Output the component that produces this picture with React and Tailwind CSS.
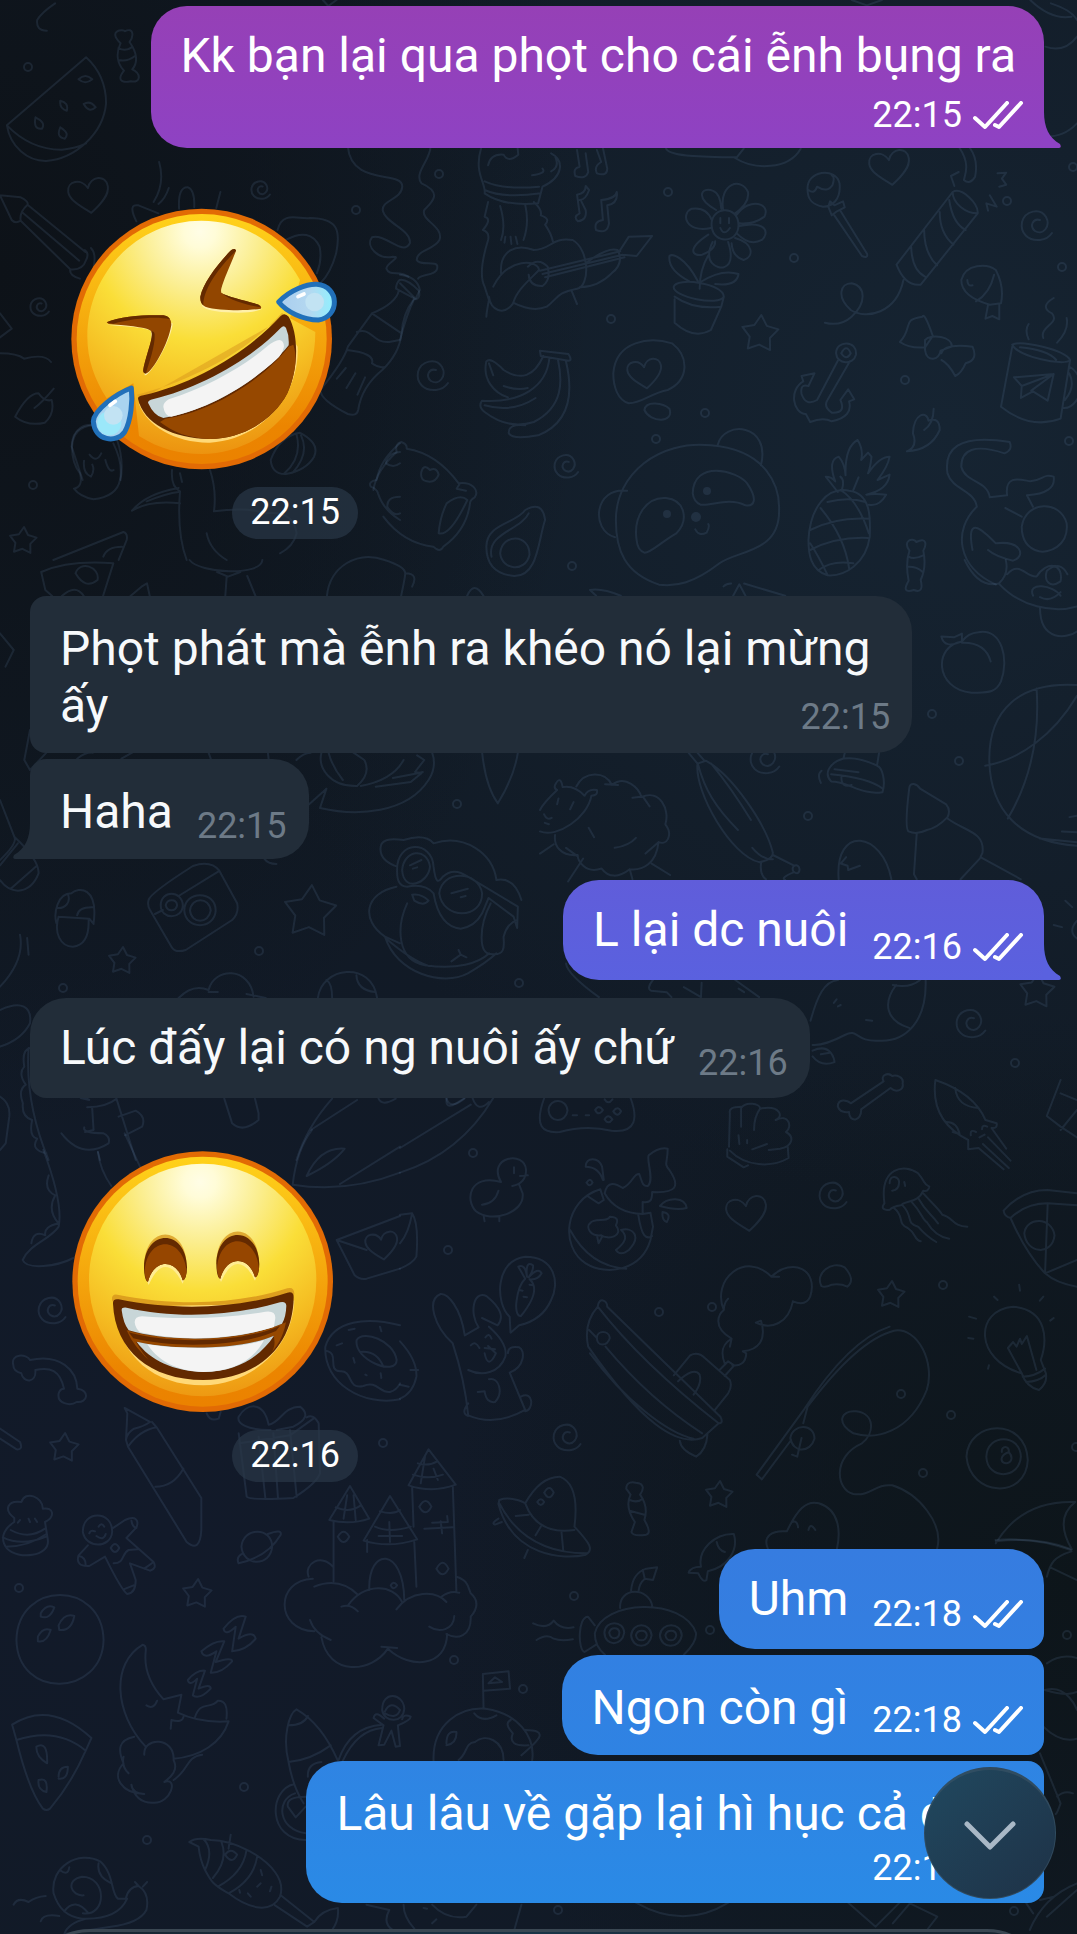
import clsx from "clsx"

const messages = [
  { id: 1, side: "out", text: "Kk bạn lại qua phọt cho cái ễnh bụng ra", time: "22:15", layout: "stacked", first: true, last: true, color: "bg-linear-to-b from-[#9640b6] to-[#8e42c3]", tail: "text-[#8e42c3]" },
  { id: 2, side: "in", sticker: "rofl", time: "22:15", space: "mt-[60px]" },
  { id: 3, side: "in", text: "Phọt phát mà ễnh ra khéo nó lại mừng ấy", time: "22:15", layout: "wrapped", space: "mt-[57px]" },
  { id: 4, side: "in", text: "Haha", time: "22:15", last: true, space: "mt-1.5" },
  { id: 5, side: "out", text: "L lại dc nuôi", time: "22:16", first: true, last: true, color: "bg-linear-to-b from-[#605dda] to-[#5a61df]", tail: "text-[#5a61df]", space: "mt-[21px]" },
  { id: 6, side: "in", text: "Lúc đấy lại có ng nuôi ấy chứ", time: "22:16", first: true, space: "mt-[18px]" },
  { id: 7, side: "in", sticker: "grin", time: "22:16", space: "mt-[53px]" },
  { id: 8, side: "out", text: "Uhm", time: "22:18", first: true, color: "bg-linear-to-b from-[#367ce0] to-[#337fe1]", space: "mt-[67px]" },
  { id: 9, side: "out", text: "Ngon còn gì", time: "22:18", color: "bg-linear-to-b from-[#3280e2] to-[#2f83e3]", space: "mt-1.5" },
  { id: 10, side: "out", text: "Lâu lâu về gặp lại hì hục cả đêm", time: "22:18", layout: "stacked", color: "bg-linear-to-b from-[#2f84e3] to-[#2a8ae6]", space: "mt-1.5" },
]

const spots = [
  [439, 174], [668, 192], [794, 258], [611, 319], [1007, 201], [1062, 267], [1073, 167], [905, 380], [1069, 441],
  [705, 413], [656, 439], [572, 566], [28, 67], [356, 210], [33, 485], [932, 714], [959, 761], [808, 816],
  [1015, 1063], [457, 804], [259, 951], [519, 983], [63, 988], [473, 1153], [448, 1250], [712, 1307], [659, 1312],
  [943, 1285], [901, 1394], [951, 1415], [923, 1473], [1076, 1447], [383, 1443], [19, 1588], [454, 1660],
  [523, 1689], [244, 1787], [147, 1840], [574, 1596], [710, 1630], [1067, 1635], [558, 1910], [1014, 1911],
]

const stars = [
  [760, 334, 19], [23, 541, 14], [310, 912, 27], [122, 961, 14], [1037, 991, 18], [891, 1295, 14], [719, 1495, 14],
  [64, 1448, 15], [197, 1594, 15],
]

const hearts = [[89, 196, 20], [890, 168, 20], [747, 1214, 20], [645, 374, 17], [382, 1246, 16]]

const swirls = [
  [435, 374, 18], [568, 465, 14], [1039, 224, 18], [262, 189, 11], [41, 306, 11], [973, 1022, 17], [767, 758, 17],
  [835, 1194, 16], [569, 1436, 16], [54, 1309, 16],
]

// each sheet keeps its own drawing scale
const sheets = [
  {
    // watermelon, candy, pencil, bottle
    place: "scale(.34439 .33333)",
    d: "M250 172 L20 376 C30 440 80 484 134 483 C220 476 300 400 308 310 C308 250 285 205 250 172 Z M20 376 Q90 450 180 449 Q220 445 250 430 M228 238 Q248 218 268 238 Q248 256 228 238 M243 312 Q262 300 278 322 Q258 340 243 312 M175 302 Q200 308 194 332 Q172 326 175 302 M103 352 Q134 368 122 386 Q96 390 103 352 M175 382 Q204 400 188 416 Q162 412 175 382 M350 130 C310 90 360 86 362 94 C390 80 388 110 376 126 C400 160 400 190 384 208 C410 220 410 250 380 244 C350 250 340 238 360 212 C340 190 336 160 350 130 M344 144 Q364 156 382 142 M344 180 Q370 186 392 168 M108 60 Q104 92 136 92 M108 60 Q120 38 160 10 M0 586 L60 592 Q84 604 80 614 L248 756 M0 586 L34 660 Q44 672 60 662 Q56 636 80 614 M60 662 L204 808 Q240 812 250 780 Q260 760 246 750 M66 638 L230 782 M204 808 Q200 826 232 836 M264 744 Q280 760 272 800 M462 486 Q480 550 446 606 M490 564 Q480 596 460 612 M640 576 L628 624 M520 626 Q516 560 546 562 Q566 570 564 622 M396 664 Q370 610 402 616 L460 640 M806 690 C820 630 870 660 900 654 C980 655 990 690 976 760 Q960 820 930 850 M830 720 Q900 680 928 740 Q936 780 920 820 M1010 440 C1020 560 1170 510 1168 560 C1166 600 1104 600 1112 634 C1120 670 1196 690 1190 730 C1170 770 1120 700 1080 712 C1060 740 1100 780 1140 770 C1170 770 1120 790 1122 806 C1130 830 1160 810 1186 830 M1250 440 C1250 480 1200 520 1224 550 C1290 580 1250 610 1232 630 C1220 660 1290 680 1276 720 C1260 750 1210 750 1210 780 C1220 800 1270 780 1270 800 C1270 830 1220 820 1214 836 M1160 840 Q1180 834 1216 872 Q1222 892 1208 898 L1150 866 Q1150 850 1160 840 M1158 872 Q1150 910 1080 940 L1010 1040 Q1000 1080 930 1170 Q930 1200 1010 1242 Q1036 1250 1040 1230 Q1050 1160 1110 1110 Q1160 1060 1166 1000 Q1170 940 1200 900 M1080 940 L1166 1000 M1036 996 C1080 980 1080 1030 1130 1026 L1160 1020 M1008 1050 Q1090 1060 1080 1090 Q1100 1106 1120 1100 M1004 1104 L978 1136 M1032 1120 L1006 1164 M1060 1132 L1038 1184 M44 1250 Q80 1180 112 1180 Q130 1206 150 1200 Q160 1240 130 1268 Q80 1280 44 1250 M156 1166 Q120 1210 100 1224 M0 1060 Q50 1060 70 1076 Q130 1060 148 1086 M0 940 L34 986 L0 1012 M208 1340 C210 1280 250 1270 280 1276 M208 1340 L240 1440 M340 1320 Q360 1380 350 1440 M244 1382 Q240 1420 264 1430 Q276 1410 268 1394 M306 1380 Q316 1420 330 1410 M260 1364 Q280 1390 294 1360 M786 1380 Q810 1310 870 1298 Q930 1330 912 1370 Q890 1410 830 1422 Q790 1424 786 1380 M860 1300 Q880 1370 826 1420 M874 1306 Q900 1360 850 1418",
  },
  {
    // hamster, strawberry and duck around the first sticker
    place: "translate(0 180) scale(.33333)",
    d: "M1200 790 Q1140 840 1130 900 Q1104 904 1112 920 Q1130 926 1134 940 Q1150 990 1200 1020 M1200 816 Q1160 820 1158 850 Q1180 866 1200 850 M1200 950 Q1160 950 1162 980 Q1180 1010 1200 1000 M516 870 Q512 920 540 934 Q530 1060 560 1140 M630 870 Q650 930 642 994 Q740 980 796 1000 Q880 990 890 1060 Q880 1100 840 1120 M396 992 Q440 940 536 924 M396 992 Q450 960 540 970 M440 964 Q500 940 536 936 M620 1060 Q630 1110 680 1140 M540 880 L546 906 M160 1140 L370 1056 Q384 1060 380 1080 L356 1140 M310 1130 Q320 1100 366 1100 M216 800 Q220 740 280 736 M340 790 Q370 850 360 900 Q350 950 280 958 Q240 950 222 926 Q250 920 240 880 Q216 850 216 800",
  },
  {
    // hamster face, strawberry
    place: "translate(360 420) scale(.33333)",
    d: "M40 210 Q50 150 110 96 Q104 70 124 66 Q142 72 140 86 Q230 100 296 190 Q324 186 340 200 Q356 216 344 232 Q330 240 330 250 Q320 330 250 380 Q240 400 220 380 Q130 370 70 290 M184 156 Q190 130 210 150 Q230 140 236 164 Q226 190 200 184 Q180 180 184 156 M260 250 Q300 220 322 240 Q270 350 236 340 Q240 290 260 250 M300 190 L290 206 L318 212",
  },
  {
    // llama with guitar, flower, lollipop, cracker, bananas, anchor, panda, pineapple, mug
    place: "translate(400 140) scale(.43176 .33333)",
    d: "M188 24 C170 100 200 130 196 160 Q240 200 320 190 L330 140 C380 110 380 60 350 40 M204 76 Q210 40 240 44 Q250 70 274 44 L272 20 M306 106 Q340 100 330 86 M360 52 Q370 80 350 94 M196 124 Q240 150 322 140 M196 150 Q240 176 326 160 M232 198 Q246 260 234 300 M290 194 Q300 250 286 300 M244 290 L242 308 M256 290 L258 312 M268 290 L272 312 M204 186 L196 230 Q214 236 192 270 Q208 276 204 300 Q180 400 196 440 L206 480 Q200 520 200 530 M310 186 Q330 210 326 226 Q350 236 336 254 Q350 280 354 304 M216 440 C250 350 320 360 322 390 C300 420 270 450 262 490 C240 530 210 510 206 470 M234 400 C230 330 270 310 310 330 C350 330 350 290 400 300 C440 330 440 440 410 446 C360 460 370 470 340 500 C310 516 280 500 262 488 M296 380 Q320 350 342 380 Q350 420 330 438 Q300 440 298 404 M324 392 L510 334 M330 402 L516 344 M336 412 L520 352 M510 330 L530 290 L584 288 L548 348 L516 344 M430 370 Q480 320 504 330 Q520 370 490 400 Q460 440 416 442 M398 454 L410 492 M410 30 L416 80 Q400 84 406 108 Q430 120 436 96 L430 40 M456 30 L466 66 Q448 80 456 100 Q480 110 480 86 L470 24 M416 220 L410 164 Q430 160 430 138 L438 150 Q430 180 416 180 M416 220 Q400 230 412 244 Q434 240 430 210 L420 184 M470 240 L466 180 Q500 176 502 156 M470 240 Q448 244 454 270 Q480 284 484 250 L480 196 Q506 190 502 156 M0 404 Q40 410 46 450 L36 476 Q0 430 0 430 M0 600 Q16 520 34 474 M722 260 C716 200 784 190 784 256 C784 310 726 314 722 260 M742 264 Q750 290 764 264 M742 234 L742 250 M762 234 L762 250 M732 210 C680 170 700 140 724 152 Q742 160 744 206 M748 206 C740 130 790 110 806 156 Q810 190 774 222 M780 224 C810 170 860 190 844 230 Q820 254 786 250 M786 258 C850 240 856 280 838 300 Q810 320 780 280 M776 294 C820 310 820 350 796 360 Q770 350 768 310 M724 306 C700 370 736 386 750 382 Q776 370 760 306 M714 284 C660 330 680 350 700 344 Q730 330 730 304 M720 264 C660 280 650 220 676 206 Q710 200 722 240 M714 346 Q694 390 694 446 M690 424 C660 350 630 340 624 348 Q620 390 670 424 M696 426 C740 390 770 396 784 402 Q780 440 730 432 M634 440 C640 410 750 430 750 470 C740 500 630 470 634 440 M636 470 Q680 510 744 500 L750 470 M636 478 L636 548 Q680 600 720 570 L744 500 M944 150 C940 90 1010 80 1018 130 C1022 180 1000 200 980 200 C956 194 944 180 944 150 M946 150 Q960 164 966 140 Q990 160 1002 134 Q1008 110 1000 106 M992 200 L996 184 L1006 196 L1026 184 L1030 202 L1012 214 L1000 226 Z M1006 226 L1070 348 Q1084 356 1082 342 L1020 212 M1280 156 C1300 140 1340 190 1338 220 C1310 220 1280 190 1280 156 M1280 156 L1150 374 Q1170 440 1206 434 L1338 220 M1250 216 Q1250 280 1282 314 M1214 270 Q1214 340 1244 376 M1184 322 Q1186 390 1216 410 M1272 180 Q1280 250 1310 270 M1166 420 C1150 520 1080 540 1044 510 C1010 470 1020 430 1046 430 C1080 440 1080 490 1046 530 Q1020 560 984 548 M1296 24 C1320 70 1310 100 1306 120 Q1320 136 1332 110 Q1340 60 1320 24 M1276 108 L1294 96 M1276 108 L1284 138 M1384 100 L1404 98 L1394 116 L1404 134 L1388 140 M1366 166 L1382 200 L1358 190 L1362 212 M1300 420 C1310 370 1360 370 1380 390 Q1400 440 1392 490 L1366 494 Q1300 470 1300 420 M1376 404 Q1366 460 1334 484 M1362 494 L1356 536 L1372 528 L1388 538 L1388 492 M1314 420 Q1314 440 1326 436 M1158 606 C1190 560 1160 540 1210 530 Q1214 514 1234 588 L1216 622 Q1180 626 1158 606 M1216 600 C1230 580 1280 590 1278 620 L1252 632 C1250 660 1220 670 1216 630 Z M1254 640 Q1260 610 1326 620 Q1340 660 1310 670 Q1300 700 1286 708 Q1270 670 1254 660 M1418 614 C1440 600 1540 630 1552 660 C1540 680 1430 650 1418 614 M1436 622 Q1500 630 1520 660 M1418 620 L1392 800 Q1460 870 1530 836 L1552 660 M1550 680 Q1580 700 1576 760 Q1560 806 1536 804 M1550 700 Q1566 740 1540 780 M1422 712 L1514 702 L1500 782 L1466 754 L1438 774 L1440 738 Z M1440 738 L1514 702 L1462 752 M1456 598 Q1446 570 1456 552 M1490 594 C1480 560 1530 550 1510 520 Q1480 500 1514 474 M1522 608 Q1550 570 1544 534 M324 632 L390 642 Q400 662 390 662 L326 648 Z M332 648 Q300 740 240 690 Q210 650 200 664 C190 720 220 760 250 772 M346 654 C340 740 280 790 190 782 Q180 800 196 816 Q250 870 310 846 C380 800 376 720 366 660 M384 662 C410 800 370 860 320 886 Q260 900 252 880 Q250 850 290 856 M240 738 Q270 752 296 744 M196 796 Q260 820 314 774 M206 670 L216 706 M494 700 C500 600 580 590 630 610 C670 650 670 720 620 750 C580 760 560 790 530 790 C504 780 494 740 494 700 M566 810 C570 780 610 790 624 806 C636 850 580 850 566 810 M1010 640 C1010 600 1060 600 1056 644 C1050 676 1012 674 1010 640 M1022 640 Q1034 610 1044 640 Q1034 664 1022 640 M1014 662 L966 780 Q940 800 930 762 Q926 730 946 738 L960 700 L930 708 L934 724 C900 750 910 820 940 822 L950 846 Q980 830 1000 844 Q1050 830 1040 784 L1052 778 L1038 748 L1020 780 Q1034 820 1000 818 Q980 800 990 780 L1042 664 M1174 934 Q1200 920 1188 880 C1190 820 1220 810 1224 842 Q1250 830 1250 870 Q1230 930 1174 934 M1236 806 Q1236 850 1214 870 M500 1140 C500 1000 600 900 720 916 C850 930 880 1040 878 1110 C880 1240 780 1230 740 1270 C680 1330 640 1340 600 1334 C520 1300 500 1230 500 1140 M736 914 C750 840 860 850 836 976 M526 1052 C450 1040 440 1170 498 1192 M678 1060 C680 960 780 990 804 1030 C830 1080 820 1100 800 1096 C760 1070 720 1100 696 1094 Q680 1084 678 1060 M548 1200 C540 1130 570 1070 616 1074 C660 1080 670 1140 640 1180 C600 1210 580 1240 566 1238 Q550 1230 548 1200 M684 1168 Q692 1190 710 1178 Q718 1160 714 1152 M946 1200 C950 1100 990 1040 1040 1052 C1090 1060 1090 1130 1088 1190 C1080 1270 1030 1310 990 1306 C950 1290 946 1240 946 1200 M950 1170 Q1010 1130 1088 1136 M950 1230 Q1010 1190 1084 1194 M970 1290 Q1000 1260 1050 1270 M974 1104 Q1030 1190 1040 1284 M1020 1050 Q1060 1080 1086 1180 M950 1210 Q970 1250 990 1304 M990 1086 Q1040 1070 1078 1086 M1014 1056 L986 1010 Q1000 1010 1008 1024 Q990 960 1016 950 Q1030 970 1032 1006 Q1030 920 1060 900 Q1074 930 1068 960 L1084 938 L1092 950 Q1090 980 1084 1000 Q1110 950 1134 950 Q1130 980 1106 1020 L1134 1004 Q1130 1050 1080 1064 Q1100 1060 1126 1064 Q1110 1100 1086 1094 M1024 1046 Q1030 1020 1020 1010 M1050 1050 L1062 1012 M200 1220 C200 1150 270 1150 290 1110 Q330 1080 336 1140 C320 1200 320 1310 264 1308 Q200 1300 200 1220 M212 1250 C200 1180 280 1170 298 1120 M232 1240 C236 1180 300 1180 300 1244 C290 1300 236 1290 232 1240 M1180 1232 C1164 1204 1186 1190 1196 1206 C1220 1190 1220 1214 1212 1232 Q1220 1280 1206 1320 Q1214 1362 1190 1350 Q1160 1362 1178 1322 Q1170 1270 1180 1232 Z M1178 1250 Q1190 1260 1212 1246 M1178 1280 Q1200 1280 1210 1296 M1412 906 C1290 880 1260 930 1268 1000 C1280 1050 1330 1050 1336 1100 C1280 1170 1290 1280 1380 1334 M1412 906 Q1420 930 1400 940 C1330 910 1300 930 1300 980 C1310 1030 1360 1020 1366 1072 L1406 1066 C1400 1000 1440 1020 1460 1024 C1490 1020 1490 1000 1514 1010 Q1520 1060 1452 1066 L1466 1100 M1440 1160 C1450 1080 1530 1080 1544 1150 C1550 1220 1500 1240 1480 1234 Q1440 1220 1440 1160 M1402 1104 L1440 1130 M1326 1230 C1310 1120 1350 1170 1380 1210 C1440 1200 1450 1250 1420 1262 Q1380 1250 1362 1230 M616 24 C620 50 700 50 780 52 L796 26 M776 54 C820 90 900 90 928 26",
  },
  {
    // loose bits beside the first bubble
    place: "scale(.68686 .33333)",
    d: "M470 0 L478 18 L490 0 M1240 0 L1262 16 L1284 0 M1530 10 Q1560 30 1568 60 M1522 140 Q1550 160 1568 110 M1522 410 Q1550 410 1568 370 M1500 0 Q1530 60 1560 50",
  },
  {
    // pizza, tree and brush tops above the second bubble
    place: "translate(0 560) scale(.68686 .33333)",
    d: "M60 36 L66 90 L76 108 M60 36 Q100 0 165 10 L150 108 M110 40 C116 0 146 20 142 60 Q124 90 110 40 M90 108 Q110 70 122 108 M276 0 C290 40 380 50 382 0 M316 36 L332 50 L350 36 M330 50 L328 108 M360 48 L372 108 M476 108 C480 20 520 -30 560 0 Q590 20 590 40 M590 40 Q610 40 600 80 M584 108 Q590 50 590 40 M680 108 Q690 60 704 108 M190 108 L206 80 L214 70 L218 108 M0 220 L20 270 L8 320",
  },
  {
    // bulb, sheep, feather, bell, gnome, ball, whale
    place: "translate(540 560) scale(.34247 .35714)",
    d: "M146 84 Q180 78 236 100 M146 84 L164 100 M564 100 L582 68 L600 100 M596 66 L716 100 M536 74 Q544 66 558 66 M1240 0 Q1280 80 1340 66 Q1370 40 1360 0 M1340 66 C1400 130 1500 150 1568 130 M1364 40 C1400 0 1420 50 1450 46 C1480 0 1530 10 1520 60 C1490 80 1470 60 1480 30 Q1520 0 1540 40 M1440 100 C1420 60 1500 70 1520 100 M1460 104 Q1490 120 1520 90 M1460 134 C1460 230 1540 220 1568 200 M1232 228 C1150 240 1150 360 1260 372 C1300 370 1330 376 1346 340 C1370 280 1350 190 1280 202 Q1250 204 1232 228 M1232 228 Q1180 250 1172 214 L1210 216 L1232 206 L1232 232 Q1300 230 1316 284 M1568 350 C1400 340 1310 420 1312 560 C1314 700 1400 790 1568 800 M1450 360 C1460 500 1430 620 1366 724 M1300 576 C1400 560 1500 490 1568 380 M1460 780 L1568 790 M1546 720 L1568 716 M1524 760 L1568 762 M0 760 C50 780 140 720 150 660 Q170 660 166 644 Q140 640 130 660 Q100 630 66 636 Q60 600 44 630 Q40 640 50 644 Q10 680 0 700 M106 634 C130 590 190 590 210 630 C250 600 290 640 296 664 C350 640 380 700 366 740 C390 770 370 800 346 790 C340 850 300 870 262 866 C230 890 200 890 180 864 C130 880 110 840 110 826 C60 830 40 800 44 770 M190 628 L228 630 M270 666 L300 662 L320 690 M142 750 L158 776 M218 806 Q260 800 280 778 M346 790 L308 822 M76 806 L110 830 M126 836 L82 900 M326 850 L380 882 M262 866 L270 894 M0 822 L40 796 M54 668 L50 684 M98 678 L88 698 M12 712 Q20 730 34 722 M14 736 L26 740 M434 540 L460 570 C450 650 560 830 640 846 Q680 840 680 820 C660 740 560 600 484 562 L460 570 M480 562 L460 540 M462 574 C480 640 510 690 578 756 M500 570 Q560 640 616 728 M620 806 Q650 840 680 838 M646 846 Q640 880 660 894 M680 826 L742 856 M758 866 C756 846 730 856 740 872 Q756 884 758 866 M742 874 Q700 890 716 896 M890 540 L886 556 C840 570 830 600 850 620 C900 620 940 660 1000 650 C1010 620 1000 580 984 576 Q930 550 886 556 M984 576 L990 540 M850 600 Q960 610 1000 640 M860 586 L930 594 M880 608 Q880 640 910 630 M822 590 Q808 600 820 624 M872 894 C860 740 1000 760 1026 894 M894 832 L878 850 L898 856 L900 868 L934 856 M1078 640 C1080 620 1100 626 1110 640 L1186 684 Q1200 700 1190 720 Q1160 750 1130 756 Q1100 770 1076 760 Q1064 750 1078 640 M1100 766 L1092 880 L1100 894 M1190 724 C1240 760 1300 760 1292 820 L1286 832 L1404 894 M1284 836 L1228 894 M1534 954 L1554 972 M1500 1022 L1524 1028 M1568 1060 Q1540 1040 1568 1010 M76 1130 Q80 1160 172 1224 M330 1176 Q310 1200 324 1206 L370 1210 L384 1224 M420 1196 L470 1224 L472 1184 M570 1176 L640 1224 M580 1200 L596 1210 M790 1290 C810 1220 830 1180 870 1176 M1126 1176 C1130 1290 1070 1350 990 1346 C920 1350 930 1310 890 1330 C850 1350 820 1360 796 1358 M1040 1190 C1000 1240 1010 1290 1078 1310 M1030 1190 Q1080 1200 1110 1176 M796 1374 C850 1350 860 1400 860 1406 Q820 1420 796 1390 M820 1384 L846 1380 M858 1240 L866 1230 M870 1250 L878 1246 M952 1288 L970 1290",
  },
  {
    // chick, mushroom, cassette, parrot
    place: "translate(0 680) scale(.35714 .33333)",
    d: "M84 150 L68 240 L84 270 M130 218 L84 270 M216 236 Q240 216 260 218 M340 236 L370 218 M584 218 L590 236 M750 218 L752 236 M0 360 L40 470 Q50 490 0 540 M40 470 Q110 540 108 580 Q90 630 50 632 Q20 630 0 600 M50 490 L0 556 M100 560 L30 626 M830 240 Q850 218 870 218 M864 374 L914 326 L896 384 C1000 410 1140 400 1200 300 Q1224 260 1210 218 M900 218 C890 260 920 320 1000 318 Q1040 280 1020 240 L990 218 M920 218 Q930 260 960 300 M1100 294 L1170 280 L1184 276 M1052 320 L1150 306 L1180 280 L1162 276 L1188 240 L1168 226 M1010 318 Q1100 300 1130 240 M1350 218 Q1360 320 1394 370 Q1440 290 1450 218 M262 730 C276 620 220 620 200 640 C160 640 150 700 158 730 M164 710 L250 716 L262 732 M164 710 C150 760 170 800 204 800 C240 796 250 760 248 716 M190 642 C200 670 180 686 160 684 M262 682 Q220 680 216 706 M416 660 Q420 640 540 558 Q590 540 614 572 L664 670 Q670 700 650 720 L520 810 Q490 820 480 800 L420 690 Q412 676 416 660 M434 702 L456 690 M500 648 L612 574 M450 676 C450 630 510 630 512 676 C510 720 450 720 450 676 M464 676 C468 656 494 656 496 676 C492 696 468 696 464 676 M516 692 C516 630 604 630 604 692 C600 750 520 750 516 692 M532 692 C536 650 586 650 590 692 C584 732 536 732 532 692 M740 536 Q750 552 774 552 M56 764 Q70 840 0 920 M76 774 L80 824 M0 990 C60 960 90 980 84 1030 Q60 1080 0 1100 M84 1104 Q60 1110 68 1160 Q50 1180 72 1214 Q50 1230 64 1270 Q60 1310 90 1320 Q80 1370 104 1376 Q84 1410 130 1420 M80 1104 Q70 1270 136 1440 M0 1250 Q30 1270 26 1310 L16 1390 L0 1410 M226 1254 L250 1260 L240 1254 M244 1282 Q300 1280 326 1256 M258 1282 L262 1350 L238 1356 M236 1342 Q230 1360 290 1360 Q310 1370 304 1390 Q230 1440 172 1360 M326 1256 L380 1440 M332 1310 L380 1292 Q410 1310 398 1340 L350 1366 M274 1416 L280 1440 M628 1256 L650 1330 Q680 1360 724 1320 L724 1300 L714 1256 M500 954 Q540 910 584 930 C600 860 700 860 710 950 M584 936 L610 936 M690 942 L744 954 M890 954 C900 860 1040 840 1056 954 M930 954 Q930 910 914 900 M998 886 Q1000 930 1050 936 M1112 560 Q1060 540 1066 500 Q1070 470 1130 480 Q1190 460 1214 490 C1300 460 1380 520 1390 600 Q1440 590 1460 660 M1112 570 C1110 480 1210 480 1214 560 C1220 610 1226 610 1240 590 M1112 570 Q1110 620 1140 620 Q1190 610 1214 640 M1126 570 C1130 510 1196 500 1204 560 C1200 610 1130 640 1126 570 M1148 556 L1180 540 M1156 566 L1168 562 M1230 640 C1236 570 1340 570 1350 640 C1350 720 1240 720 1230 640 M1214 640 Q1230 740 1290 746 Q1330 740 1350 700 L1368 654 M1240 590 Q1270 560 1310 590 L1450 680 L1448 744 L1438 710 L1368 654 M1264 640 L1310 626 M1290 652 L1304 648 M1110 620 C1020 640 1010 720 1078 770 L1120 790 M1154 644 Q1180 640 1200 662 Q1186 680 1160 662 Z M1140 670 C1110 740 1110 840 1190 856 C1280 870 1340 850 1370 820 M1374 670 C1340 740 1340 820 1374 822 C1420 830 1410 790 1410 770 Q1420 730 1448 720 M1078 770 C1110 880 1240 920 1310 880 Q1360 850 1390 820 M1080 775 Q1150 840 1200 858 M1284 810 L1290 824 L1306 832 M1290 824 L1264 844 M870 1350 L1000 1260 M830 1440 Q860 1340 930 1256 M1060 1256 Q1070 1280 1108 1256 M1250 1256 Q1260 1290 1300 1256",
  },
  {
    // gamepad, fish bowl, hand, jellyfish, rabbit, ship, rod, lamp, ufo
    place: "translate(400 1080) scale(.43176 .33333)",
    d: "M334 54 C310 140 330 160 370 156 Q430 134 490 152 C550 160 550 110 534 54 M344 90 C346 54 386 54 388 92 C384 130 346 130 344 90 M452 90 Q460 72 470 90 Q460 110 452 90 M494 94 Q504 76 512 94 Q504 114 494 94 M474 118 Q482 100 492 118 Q482 136 474 118 M474 58 Q482 76 492 58 M400 106 L410 106 M430 106 L438 106 M0 204 L164 74 M0 278 Q140 220 216 54 M108 54 Q104 90 130 70 L150 54 M168 54 Q180 100 206 66 M234 306 C200 230 290 210 292 270 Q292 310 260 318 M234 306 C160 280 150 360 176 394 C210 430 290 400 284 340 L276 314 M228 332 Q220 370 190 374 M264 262 L264 280 M278 288 L296 286 M194 410 L196 424 M230 410 L230 424 M762 200 L764 100 Q760 80 790 80 L790 140 M790 84 C800 64 834 70 834 86 Q820 110 820 150 M834 86 C880 74 890 110 870 120 M870 120 C900 100 910 140 894 156 C914 170 910 200 880 206 L854 210 M898 200 L900 234 C860 264 800 260 764 212 M758 208 L758 230 L796 262 L806 256 M816 208 L850 192 M804 180 L804 190 M784 166 L786 192 M1014 80 C1014 54 1036 60 1044 70 L1120 4 M1014 80 Q1020 100 1040 96 C1040 130 1070 124 1068 88 L1136 24 C1150 40 1168 30 1164 10 C1168 -8 1150 -16 1140 -12 C1130 -24 1112 -14 1120 4 M1240 0 C1230 100 1270 150 1316 180 L1316 208 L1340 204 L1398 268 M1240 0 Q1330 40 1356 120 L1382 130 Q1384 146 1370 144 L1404 206 M1286 24 Q1290 80 1340 84 M1266 126 Q1290 126 1296 162 L1280 156 M1322 166 Q1320 146 1334 156 M1348 148 Q1348 132 1360 140 M1342 172 L1354 164 M1350 192 L1410 264 M1362 172 L1414 242 M1530 0 L1498 108 L1530 140 L1568 172 M1530 40 L1568 60 M1530 150 L1568 90 M430 260 C430 230 460 230 468 260 L472 300 M430 260 Q460 260 470 300 M432 308 Q440 290 446 308 Q440 324 432 308 M474 340 C480 300 500 310 516 324 C540 310 540 280 554 282 C560 300 560 320 574 318 C590 300 570 240 576 226 Q600 200 620 206 C620 250 610 250 624 270 C650 320 640 340 584 336 C584 360 580 370 562 366 L562 400 M474 340 Q500 400 562 402 L580 398 M464 328 C380 360 370 500 430 550 C480 590 560 570 580 480 L586 440 L580 398 M434 348 L460 370 L472 360 L464 328 M552 406 C560 470 570 480 584 468 M394 450 Q440 560 524 566 M440 430 C450 410 480 430 486 410 Q510 410 500 436 C520 470 480 480 466 466 C440 470 430 440 440 430 M456 466 L460 490 L468 470 M512 450 C540 440 560 470 530 510 Q510 530 500 510 C520 490 530 470 512 450 M602 378 C620 350 660 350 664 384 Q640 392 602 378 M608 396 Q630 400 618 426 Q606 420 608 396 M1122 370 C1110 260 1170 250 1200 280 C1220 310 1210 310 1226 320 Q1224 336 1212 332 C1200 370 1170 360 1160 376 Q1140 380 1134 390 Q1110 390 1122 370 M1134 310 C1134 280 1156 290 1156 306 Q1156 330 1140 332 M1168 306 L1170 318 M1144 384 C1170 410 1150 430 1176 444 C1196 460 1190 480 1206 484 M1164 376 C1190 410 1170 430 1200 440 Q1220 470 1242 486 M1184 364 C1210 400 1210 420 1220 426 Q1240 470 1272 476 M1200 354 C1220 400 1230 400 1246 430 M1212 340 C1240 380 1250 390 1256 404 C1280 410 1280 440 1314 440 M1398 392 Q1440 330 1500 330 L1568 340 M1398 392 Q1400 410 1414 414 Q1450 370 1500 370 L1568 376 M1414 414 Q1450 520 1494 580 L1568 540 M1500 374 L1494 580 M1446 460 C1450 410 1510 410 1516 466 C1510 530 1450 520 1446 460 M1494 580 Q1520 610 1568 620 M0 404 L28 400 Q44 430 38 530 Q30 550 0 566 M28 400 Q20 460 0 490 M256 758 L254 710 C220 670 220 540 290 530 C360 530 370 610 350 660 Q330 720 276 736 Z M290 596 L274 560 Q290 550 294 590 Q290 540 308 556 Q310 570 298 592 Q320 560 328 580 Q320 600 300 598 C320 620 310 660 280 708 C260 710 270 620 290 596 M276 630 L284 632 M300 614 L308 616 M286 650 L294 652 M150 766 C140 680 110 640 94 642 C60 660 80 740 122 790 Q150 900 158 1006 Q220 1040 290 990 L254 878 C290 860 290 810 276 802 Q250 796 250 820 M150 766 L182 742 C160 700 170 630 200 648 Q250 700 226 736 L190 714 M206 740 Q250 790 244 830 C230 880 190 890 158 870 M164 796 Q174 780 184 804 M198 772 Q206 756 212 776 M196 804 L220 808 M196 820 Q204 870 222 820 L204 798 M206 898 C230 890 240 940 220 966 Q200 970 196 934 L180 936 M280 950 C310 930 310 990 290 994 M158 970 Q140 1000 158 1008 M0 784 Q40 840 38 890 Q30 940 0 956 M24 870 L42 870 M0 914 L20 920 M458 680 C460 650 480 660 480 680 L742 1010 Q750 1030 738 1030 L700 1074 C640 1100 560 1030 436 800 Q424 730 458 680 M458 680 Q560 850 738 1030 M440 820 C520 960 620 1060 680 1076 M438 750 L456 774 M476 800 C560 930 640 1010 700 1060 M456 774 C456 750 484 750 486 774 C480 800 456 800 456 774 M634 886 L672 826 Q690 814 706 834 L764 900 Q770 920 760 940 L728 992 M644 904 Q680 860 694 884 Q700 910 680 944 M740 870 L760 844 L774 856 L752 888 M648 1082 Q650 1110 686 1130 Q710 1110 712 1064 M752 850 C740 810 750 790 768 776 C720 740 740 700 750 690 C720 600 800 510 860 590 C910 530 970 570 950 650 Q940 680 910 664 M860 590 L878 590 M910 664 C900 730 860 750 824 728 L836 722 C850 780 830 810 794 814 L802 820 Q800 860 770 856 M750 690 Q750 670 760 656 M768 776 L764 800 M976 618 C960 580 1000 540 1030 562 Q1056 600 1036 620 Q1020 610 1000 614 Q984 624 976 618 M826 1184 L936 988 Q1040 780 1134 740 M838 1198 L906 1080 M826 1184 L838 1198 M934 1030 L944 980 Q1060 780 1144 752 C1200 740 1240 850 1220 930 C1180 1060 1100 1080 1050 1060 C1010 1030 1020 990 1056 994 C1100 1000 1100 1060 1070 1090 C1000 1130 1010 1230 1050 1242 C1090 1250 1100 1210 1140 1216 C1200 1240 1260 1330 1244 1406 M904 1074 C910 1030 960 1030 960 1076 C950 1120 910 1120 904 1074 M930 1074 L920 1130 L908 1124 M1440 880 C1330 840 1330 690 1420 680 C1500 690 1500 780 1484 840 L1496 880 Q1500 910 1480 930 Q1450 920 1440 880 M1440 880 L1408 804 L1420 786 L1428 800 L1436 776 L1440 792 L1452 768 L1474 870 M1442 890 Q1470 890 1494 866 M1450 906 Q1480 904 1496 884 M1376 650 L1384 660 M1434 614 L1436 632 M1490 650 L1482 662 M1318 710 L1334 716 M1316 774 L1328 776 M1364 856 L1362 866 M1506 722 L1514 714 M1312 1130 C1316 1020 1450 1010 1454 1140 C1450 1260 1320 1250 1312 1130 M1358 1130 C1360 1060 1436 1060 1438 1130 C1434 1200 1360 1200 1358 1130 M1394 1116 C1392 1096 1412 1096 1410 1116 C1420 1130 1418 1148 1404 1150 C1388 1146 1390 1126 1410 1116 M230 1260 C250 1250 280 1260 290 1270 C320 1200 350 1190 370 1190 C410 1210 410 1280 404 1340 C440 1390 450 1410 430 1424 C380 1440 260 1430 228 1272 Z M290 1270 C310 1340 350 1360 404 1350 M230 1270 Q290 1420 432 1420 M334 1238 Q346 1210 356 1238 Q346 1266 334 1238 M318 1266 Q326 1250 334 1266 Q326 1284 318 1266 M268 1308 L298 1304 M314 1366 L326 1340 M378 1410 L374 1356 M228 1316 Q210 1330 220 1334 L236 1326 M288 1434 L296 1410 M524 1226 C524 1204 540 1206 546 1208 C568 1210 564 1230 556 1244 Q576 1280 566 1320 Q584 1360 570 1364 Q540 1370 536 1356 L544 1326 Q520 1280 534 1244 Z M532 1260 Q550 1270 562 1256 M532 1292 L566 1304 M1380 1390 Q1440 1260 1564 1266 C1530 1300 1530 1350 1556 1408 Q1480 1370 1380 1384 M852 1406 C840 1370 860 1350 896 1354 C920 1290 940 1260 970 1270 C1020 1290 1020 1360 1012 1406 M946 1350 Q950 1326 962 1350 M908 1326 Q920 1320 922 1342",
  },
  {
    // dinosaur, envelope, rainbow, tube, gift, doughnut
    place: "translate(0 1130) scale(.33333)",
    d: "M146 136 Q130 180 166 196 Q140 240 176 280 Q130 290 136 316 Q100 300 94 340 M130 60 Q190 220 176 290 C150 330 90 340 68 390 C80 420 170 410 220 384 M294 66 Q300 120 334 168 M374 10 L420 110 M878 164 Q890 60 936 0 M878 164 Q1040 190 1200 128 M1020 162 L1200 50 M920 138 Q960 50 1034 56 Q1000 100 920 138 M1200 258 L1010 330 L1064 436 Q1080 450 1100 446 L1200 416 M1010 330 L1100 360 M40 706 C30 670 80 670 90 690 C180 670 230 720 232 776 C270 780 264 820 230 816 C210 830 170 820 176 790 Q180 776 192 776 C180 720 150 710 106 720 C110 760 70 760 64 730 Q40 724 40 706 M374 834 L450 876 Q430 890 402 896 Q380 910 378 930 L382 850 Z M378 930 L384 950 Q420 900 470 892 L456 876 M384 950 L560 1236 Q600 1270 604 1200 L604 1104 L470 892 M466 1070 Q520 1070 550 1016 M0 896 L60 936 Q70 960 50 958 L0 926 M812 900 C740 900 710 880 716 860 C740 820 790 810 806 884 C840 880 850 830 900 830 Q940 860 880 890 L830 900 M716 910 L740 1100 Q750 1112 880 1104 Q950 1060 960 1030 L956 880 Q940 850 920 862 M776 920 L796 1104 M820 910 L834 1104 M870 900 L890 1100 M718 940 L870 916 L940 866 M1200 586 C1100 560 1000 570 976 650 C970 760 1090 830 1200 808 M978 662 C1020 670 980 720 1020 724 C1060 720 1040 780 1090 768 C1130 750 1140 790 1170 786 Q1190 780 1200 760 M1070 630 C1090 600 1180 630 1190 690 C1190 740 1060 690 1070 630 M1080 666 Q1130 660 1150 710 M1010 646 L1026 640 M1046 600 L1064 596 M1140 590 L1144 604 M1060 684 L1064 698 M1096 734 L1100 736 M1142 730 L1144 744 M620 850 Q630 876 656 866 L662 846",
  },
  {
    // muffin, gingerbread, planet, ball, moon, castle, rocket, snail, ice cream
    place: "translate(0 1430) scale(.35714 .33333)",
    d: "M40 264 C10 240 20 210 60 216 C70 180 120 200 120 236 C150 230 156 260 126 276 L134 330 C140 380 50 390 20 356 C0 330 6 300 40 276 Z M30 300 Q80 330 126 296 M8 322 Q60 350 130 320 M16 350 Q80 350 130 312 M56 270 L50 278 M80 266 L84 276 M98 266 L104 276 M232 306 C230 240 316 240 314 306 C310 356 240 356 232 306 M250 310 Q254 298 266 304 M276 290 Q284 276 292 290 M270 318 Q290 334 296 312 M314 296 L350 270 C380 256 390 270 382 292 L354 324 L430 396 Q440 416 420 422 L364 400 L380 450 Q380 490 356 492 Q340 480 294 380 L250 408 Q210 410 220 376 L246 346 M310 354 Q322 330 334 354 Q322 378 310 354 M318 400 C350 400 340 370 360 360 L386 358 M220 378 Q240 380 240 406 M368 272 Q370 290 382 294 M346 478 L374 466 M404 416 L430 396 M676 350 C680 290 762 290 762 350 C758 410 680 410 676 350 M750 312 Q790 296 786 314 Q750 380 668 400 Q660 380 680 370 M46 630 C50 450 286 450 290 630 C286 800 50 810 46 630 M114 550 Q130 520 152 532 Q140 570 114 560 Z M164 586 Q180 548 208 558 Q200 604 166 600 Z M106 620 Q120 590 142 600 Q130 640 106 634 Z M34 884 Q140 810 256 924 L240 962 Q160 890 46 930 Z M46 930 Q80 1080 120 1136 Q130 1144 140 1136 Q200 1060 240 962 M102 950 Q134 930 132 1000 Q100 980 102 950 M164 1040 Q164 1010 190 1010 Q190 1050 164 1046 M108 1050 Q136 1040 130 1086 Q104 1080 108 1050 M408 950 C320 850 310 700 400 644 Q410 646 408 664 Q400 740 458 808 L508 794 L498 848 Q560 880 640 874 C620 940 560 980 486 986 M410 826 Q430 840 440 812 M478 896 L480 870 Q510 880 514 860 M546 862 C560 810 590 840 610 812 Q640 810 634 866 M404 974 C400 920 490 920 486 990 C500 1020 480 1040 460 1056 C500 1040 480 1120 430 1118 Q380 1120 368 1064 M404 1092 C340 1090 310 1040 346 1000 C330 960 330 930 376 920 M346 980 Q340 1010 360 1030 M368 1064 Q370 1090 404 1092 M486 1050 C530 1020 520 980 566 974 M526 750 Q550 720 574 722 L556 776 Q590 760 590 776 Q560 810 540 796 L552 746 Q530 770 526 750 M564 664 Q600 630 628 634 L604 696 Q650 680 650 694 Q620 730 590 728 L606 664 Q570 690 564 664 M626 596 Q660 550 688 560 L668 626 Q710 600 716 626 Q690 660 650 664 L660 590 Q630 620 626 596 M980 168 L1034 266 Q980 286 922 270 Z M940 232 Q980 250 1010 226 M972 196 L962 266 M990 196 L996 270 M1092 198 L1168 328 Q1090 356 1018 332 Z M1064 244 Q1100 256 1120 240 M1050 290 Q1090 310 1150 290 M1090 276 L1092 336 M1200 58 L1276 164 Q1210 190 1144 166 Z M1170 100 Q1200 110 1224 94 M1156 134 Q1200 150 1240 134 M1190 80 L1178 160 M1214 116 L1226 150 M934 276 L934 454 M1028 330 L1028 366 M1154 174 L1158 290 M1160 336 L1166 470 M1268 172 L1278 486 M1034 480 C1030 350 1130 350 1132 510 M946 320 Q962 290 978 320 Q962 352 946 320 M1174 230 Q1192 196 1208 230 Q1192 264 1174 230 M1222 416 Q1240 380 1256 416 Q1240 450 1222 416 M1094 466 Q1102 450 1112 466 Q1102 484 1094 466 M1188 296 L1268 292 M1210 278 L1254 276 L1252 258 M1234 274 L1238 310 M1060 318 L1126 318 M932 410 C900 370 850 400 864 440 M876 446 C770 450 770 600 880 604 M880 470 Q950 440 1002 494 M956 530 Q980 520 1002 544 M976 524 C1020 460 1100 460 1126 516 M1110 538 C1150 480 1220 480 1250 516 M1236 500 Q1260 480 1286 488 M1278 440 C1310 450 1310 470 1318 490 Q1350 520 1318 560 C1320 620 1280 630 1250 612 M1272 558 C1270 600 1230 610 1202 590 M868 570 Q880 610 926 630 M900 622 C920 740 1040 730 1086 656 M1068 650 L1112 654 M1086 656 C1150 720 1250 710 1252 612 M808 996 C790 920 810 850 830 838 Q900 880 946 992 M808 886 Q850 886 862 858 M808 996 Q870 990 926 946 M808 996 Q820 1070 850 1120 M862 1040 Q860 1000 900 996 M824 1062 C750 1080 750 1230 856 1230 M826 1090 C770 1110 780 1200 856 1210 M856 1100 Q800 1100 806 1130 L828 1162 L856 1130 M948 990 Q980 890 1070 884 M960 992 Q1000 900 1070 894 M1070 840 C1070 780 1130 790 1132 836 C1130 880 1076 880 1070 840 M1078 844 Q1094 810 1120 840 Q1110 870 1078 850 M1076 866 Q1050 840 1046 864 L1074 886 L1060 946 L1076 944 L1096 902 L1108 950 L1120 948 L1114 886 Q1150 870 1150 860 Q1130 850 1126 868 M1214 992 C1210 880 1290 830 1360 836 C1450 850 1500 920 1490 992 M1354 836 L1352 732 L1424 724 L1428 776 L1354 782 M1368 760 L1386 742 L1406 756 Z M1250 940 Q1250 900 1278 906 Q1280 940 1250 946 M1284 990 C1310 970 1300 940 1330 936 C1360 910 1410 930 1410 990 M1430 870 Q1410 880 1436 910 Q1420 950 1480 946 M1328 850 Q1350 880 1390 856 M1470 900 C1540 900 1510 930 1460 976 M38 1424 Q50 1400 80 1416 Q100 1400 128 1398 M114 1474 Q120 1450 166 1458 M150 1390 C140 1310 220 1260 280 1294 C320 1330 310 1390 330 1406 L352 1406 Q360 1370 388 1368 L378 1356 M400 1370 L412 1356 M388 1368 Q420 1390 410 1440 Q390 1480 310 1490 L180 1512 M150 1390 Q170 1460 230 1466 Q330 1470 356 1406 M234 1396 C200 1400 180 1350 230 1340 C300 1340 300 1460 232 1450 M168 1320 Q190 1340 194 1312 M276 1300 Q270 1340 312 1360 M180 1444 Q210 1400 248 1450 M180 1512 Q190 1480 240 1466 M530 1236 Q550 1220 590 1230 Q640 1230 700 1264 C760 1300 800 1350 784 1400 C760 1450 700 1440 640 1390 C590 1360 590 1350 574 1320 Q560 1290 556 1250 Z M570 1228 Q600 1260 574 1320 M620 1236 Q640 1290 596 1344 M690 1262 Q680 1330 610 1370 M720 1280 Q710 1350 640 1390 M630 1274 Q646 1250 664 1274 Q650 1306 630 1274 M646 1214 L640 1256 M786 1396 L880 1476 L860 1490 L770 1426 M880 1476 Q900 1440 946 1434 Q950 1470 930 1500 M730 1320 L734 1336 M720 1370 L730 1360 M760 1370 L756 1384 M694 1390 L702 1400 M670 1380 L672 1388 M1026 1424 L1090 1440 M1130 1424 Q1130 1460 1160 1496 M1210 1424 Q1250 1470 1306 1460 L1334 1424 M1186 1434 L1196 1436 M1210 1480 L1222 1468 M1090 1440 Q1070 1480 1100 1500 M1460 1424 L1440 1500",
  },
  {
    // fish, submarine, umbrella
    place: "translate(540 1530) scale(.34247 .33333)",
    d: "M470 110 C460 60 510 10 566 12 C580 60 550 110 490 124 L486 150 Q476 160 462 130 L434 128 Q440 110 470 110 M516 36 Q520 60 540 66 M160 310 C180 210 420 200 456 310 Q456 340 420 374 M160 310 Q160 350 190 374 M234 234 C230 170 320 170 328 230 M266 182 Q270 130 310 116 L342 112 L330 150 L306 146 Q290 160 288 182 M300 120 L306 146 M160 286 L140 260 C110 260 110 360 130 366 L164 344 M188 308 C190 270 244 270 246 308 C240 350 190 350 188 308 M202 308 C206 290 230 290 232 308 C230 330 206 330 202 308 M266 316 C270 276 322 276 326 316 C320 358 270 358 266 316 M280 316 C284 298 310 298 312 316 C308 336 284 336 280 316 M350 316 C354 276 412 276 414 316 C408 358 354 358 350 316 M366 316 C370 298 396 298 398 316 C394 336 370 336 366 316 M-20 280 Q20 300 40 272 Q60 300 98 292 M-10 330 Q20 310 40 326 Q60 334 96 328 M1330 30 Q1440 20 1550 60 M1552 64 C1500 80 1490 100 1480 140 M1490 112 L1568 150 M1480 400 Q1520 370 1568 384 M1474 480 Q1540 500 1568 486 M1474 480 C1540 460 1568 540 1568 540 M1470 590 Q1520 640 1568 626 M1460 670 L1520 820 Q1510 850 1506 852 M1510 800 Q1530 780 1556 790 M280 1118 Q420 1200 550 1118 M900 1118 L980 1190 L1050 1118 M1030 1180 L1080 1120 L1160 1160 L1130 1200 M1460 1110 L1500 1100 M1430 1200 Q1470 1100 1568 1060 M1480 1160 L1568 1080 M1420 1120 L1440 1150",
  },
]

function Star({ x, y, r }) {
  const points = Array.from({ length: 10 }, (_, i) => {
    const radius = i % 2 ? r * 0.56 : r
    const angle = (i * Math.PI) / 5 - 1.5
    return `${(x + radius * Math.cos(angle)).toFixed(1)},${(y + radius * Math.sin(angle)).toFixed(1)}`
  })
  return <polygon points={points.join(" ")} />
}

function Wallpaper() {
  return (
    <div
      className="absolute inset-0 -z-10 bg-[#111a25] bg-[radial-gradient(ellipse_55%_45%_at_0%_14%,#0d1218_0%,#0d121800_100%),radial-gradient(ellipse_70%_40%_at_88%_22%,#162432_0%,#16243200_100%),radial-gradient(ellipse_60%_30%_at_100%_82%,#0d151a_0%,#0d151a00_100%),radial-gradient(ellipse_70%_40%_at_15%_80%,#121a2a_0%,#121a2a00_100%)]"
      aria-hidden="true"
    >
      <svg
        viewBox="0 0 1077 1934"
        preserveAspectRatio="xMidYMin slice"
        className="size-full"
        fill="none"
        stroke="#6f96bd"
        strokeOpacity="0.14"
        strokeWidth="2"
        strokeLinecap="round"
        strokeLinejoin="round"
      >
        {sheets.map((sheet) => (
          <g key={sheet.place} transform={sheet.place}>
            <path d={sheet.d} vectorEffect="non-scaling-stroke" />
          </g>
        ))}
        {spots.map(([x, y]) => (
          <circle key={`${x}-${y}`} cx={x} cy={y} r="4" />
        ))}
        {stars.map(([x, y, r]) => (
          <Star key={`${x}-${y}`} x={x} y={y} r={r} />
        ))}
        {hearts.map(([x, y, r]) => (
          <path
            key={`${x}-${y}`}
            transform={`translate(${x} ${y}) rotate(-8) scale(${r / 20})`}
            d="M0 17 C-14 6 -20 0 -20 -7 C-20 -18 -5 -19 0 -8 C4 -20 20 -19 20 -7 C20 1 13 8 0 17 Z"
            vectorEffect="non-scaling-stroke"
          />
        ))}
        {swirls.map(([x, y, r]) => (
          <path
            key={`${x}-${y}`}
            transform={`translate(${x} ${y}) scale(${r / 18})`}
            d="M1 -4 C-6 -6 -10 2 -4 7 C4 12 12 2 7 -7 C1 -17 -14 -13 -17 -2 C-19 9 -11 17 1 16 Q9 15 13 9"
            vectorEffect="non-scaling-stroke"
          />
        ))}
        <g fill="#6f96bd" fillOpacity="0.14" stroke="none">
          <circle cx="707" cy="491" r="4" />
          <circle cx="667" cy="514" r="4" />
          <circle cx="696" cy="517" r="5" />
        </g>
      </svg>
    </div>
  )
}

function FaceDefs({ id }) {
  return (
    <defs>
      <linearGradient id={`${id}-rim`} x1="0" y1="0" x2="0" y2="1">
        <stop offset="0" stopColor="#ffd21a" />
        <stop offset="0.5" stopColor="#f4a40c" />
        <stop offset="0.85" stopColor="#ec8500" />
        <stop offset="1" stopColor="#eb8200" />
      </linearGradient>
      <radialGradient id={`${id}-face`} gradientUnits="userSpaceOnUse" cx="600" cy="155" r="680">
        <stop offset="0" stopColor="#fffde6" />
        <stop offset="0.07" stopColor="#fffcd8" />
        <stop offset="0.26" stopColor="#fbee90" />
        <stop offset="0.48" stopColor="#fade38" />
        <stop offset="0.72" stopColor="#f5bd22" />
        <stop offset="1" stopColor="#ec900e" />
      </radialGradient>
      <linearGradient id={`${id}-tear`} x1="0" y1="0" x2="1" y2="0">
        <stop offset="0" stopColor="#a9cdee" />
        <stop offset="0.55" stopColor="#b4d8f0" />
        <stop offset="1" stopColor="#8ff0ff" />
      </linearGradient>
    </defs>
  )
}

function RoflFace() {
  return (
    <svg viewBox="192 84 840 786" className="w-[280px] h-[262px]" role="img" aria-label="Rolling on the floor laughing">
      <FaceDefs id="rofl" />
      <circle cx="605" cy="477" r="391" fill="#e26b04" />
      <circle cx="605" cy="477" r="375" fill="url(#rofl-rim)" />
      <path
        d="M604 122 C416 122 262 276 262 470 C262 540 285 600 320 655 L400 610 L417 768 C480 808 540 822 605 822 C790 822 946 660 946 456 L870 415 L900 300 C840 190 730 122 604 122 Z"
        fill="url(#rofl-face)"
      />
      <path d="M320 434 C360 438 430 440 452 452 C462 490 434 550 434 586 C450 590 515 480 518 430 Z" fill="#fff0a8" />
      <path d="M605 374 Q610 392 680 397 Q760 402 786 386 L700 370 Z" fill="#fff0a8" />
      <path d="M320 427 C360 408 440 404 490 406 Q514 410 514 434 C506 490 460 570 440 580 Q428 582 430 568 C440 520 462 470 454 454 Q444 440 326 432 Z" fill="#924600" />
      <path d="M320 427 C360 408 440 404 490 406 Q505 408 510 418 C470 408 400 415 340 431 Z M430 568 C440 520 462 470 454 454 Q462 452 464 462 C466 500 446 550 438 580 Q428 582 430 568 Z" fill="#642a00" />
      <path d="M708 212 C706 204 698 206 690 214 C650 256 608 312 601 350 Q600 374 616 380 C660 394 750 392 782 386 Q788 378 770 372 C730 360 680 350 664 338 C658 326 690 260 708 212 Z" fill="#924600" />
      <path d="M708 212 C706 204 698 206 690 214 C650 256 608 312 601 350 Q600 368 610 376 C610 330 650 270 708 212 Z M782 382 C740 374 690 362 664 338 C680 350 740 362 776 374 Z" fill="#642a00" />
      <path d="M412 644 C580 600 750 510 846 398 L858 410 L420 660 Z" fill="#d7961c" opacity="0.5" />
      <path d="M416 670 C440 740 530 790 630 788 C780 780 900 650 893 500 L880 480 L450 690 Z" fill="#ffd978" />
      <path d="M414 656 Q414 648 430 646 C590 610 750 510 842 408 Q854 396 866 410 C895 460 898 560 862 640 C820 720 730 776 630 777 C520 776 430 730 414 656 Z" fill="#622900" />
      <path d="M496 716 C620 700 780 610 866 500 L880 494 C896 540 880 600 862 640 C820 720 730 776 630 777 C560 774 520 756 480 726 Z" fill="#964800" />
      <path d="M444 668 Q446 660 458 658 C600 624 750 540 842 444 Q852 434 858 444 Q868 466 866 496 C790 590 640 690 490 714 Q462 708 444 668 Z" fill="#c8d6d8" />
      <path d="M490 680 Q490 668 506 658 C620 622 730 560 800 500 Q850 460 852 500 Q846 524 830 538 C750 610 640 680 514 710 Q494 708 490 680 Z" fill="#f4f4f4" />
      <g strokeLinejoin="round">
        <path d="M836 366 C870 330 920 312 950 313 C1020 318 1020 412 955 420 C910 420 860 396 836 366 Z" fill="url(#rofl-tear)" stroke="#2170b9" strokeWidth="15" />
        <circle cx="944" cy="366" r="28" fill="#c2e3f3" />
        <path d="M894 350 L912 342" stroke="#fff" strokeWidth="11" strokeLinecap="round" />
        <path d="M394 624 C350 640 282 690 280 724 C284 784 350 790 374 756 C394 720 398 660 394 624 Z" fill="#a9d4f0" stroke="#2170b9" strokeWidth="15" />
        <circle cx="328" cy="730" r="36" fill="#9be8fa" />
        <circle cx="340" cy="706" r="28" fill="#c2e3f3" />
        <path d="M330 676 L346 664" stroke="#fff" strokeWidth="11" strokeLinecap="round" />
      </g>
    </svg>
  )
}

function GrinFace() {
  return (
    <svg viewBox="192 62 840 786" className="w-[280px] h-[262px]" role="img" aria-label="Grinning face with smiling eyes">
      <FaceDefs id="grin" />
      <circle cx="608" cy="454" r="391" fill="#e26b04" />
      <circle cx="608" cy="454" r="375" fill="url(#grin-rim)" />
      <ellipse cx="608" cy="449" rx="341" ry="349" fill="url(#grin-face)" />
      {[0, 217].map((dx) => (
        <g key={dx} transform={`translate(${dx} ${dx ? -9 : 0})`}>
          <path d="M432 410 C432 280 560 280 560 410 Z" fill="#d99a1e" opacity="0.8" />
          <path d="M436 440 L446 464 Q470 410 496 410 Q524 410 548 460 L558 430 L500 380 Z" fill="#ffec92" />
          <path d="M432 410 C434 294 558 294 561 410 C560 440 554 450 548 450 C530 384 462 384 444 454 C436 454 432 430 432 410 Z" fill="#642a00" />
          <path d="M434 424 C440 314 550 314 560 424 Q556 450 548 450 C530 384 462 384 444 454 Q436 450 434 424 Z" fill="#964600" />
        </g>
      ))}
      <path d="M336 510 Q334 490 352 493 C520 526 700 526 862 474 Q882 468 883 490 L870 520 L350 530 Z" fill="#dd9f1e" />
      <path d="M342 530 C360 680 460 765 610 765 C770 760 880 640 883 510 L860 520 Z" fill="#ffd978" />
      <path d="M339 520 Q338 504 356 507 C520 540 700 538 862 487 Q881 482 881 500 C880 650 770 748 610 749 C450 748 345 660 339 520 Z" fill="#622900" />
      <path d="M380 600 C480 632 720 640 858 576 C850 620 830 650 816 664 C830 640 820 620 822 616 C720 660 520 660 408 634 Q430 676 460 702 Q400 650 380 600 Z" fill="#964800" />
      <path d="M386 606 C500 640 720 640 840 586 L828 602 C720 650 520 654 400 624 Z" fill="#622900" />
      <path d="M365 540 Q364 530 380 532 C520 564 690 560 840 516 Q858 512 859 526 Q858 560 846 580 C720 634 500 636 386 600 Q370 580 365 540 Z" fill="#c8d6d8" />
      <path d="M404 576 Q404 558 426 558 C540 568 680 564 796 544 Q826 540 826 562 L822 590 C700 628 540 634 420 606 Q406 594 404 576 Z" fill="#f4f4f4" />
      <path d="M410 634 C520 660 720 660 822 616 C780 680 710 724 610 725 C520 722 450 690 410 634 Z" fill="#c8d6d8" />
      <path d="M442 642 C540 658 700 658 792 630 C760 690 700 724 610 725 C540 722 480 700 442 642 Z" fill="#f4f4f4" />
    </svg>
  )
}

function Checks() {
  return (
    <svg viewBox="0 0 52 30" className="w-[52px] h-[30px]" fill="none" stroke="currentColor" strokeWidth="4" strokeLinecap="round" strokeLinejoin="round" role="img" aria-label="Read">
      <path d="M3 17 L13 26 L35 2" />
      <path d="M23 24 L27 26 L49 2" />
    </svg>
  )
}

function Stamp({ message, className }) {
  const out = message.side === "out"
  return (
    <span className={clsx("flex items-center text-[36px] leading-[41px] whitespace-nowrap", out ? "gap-2.5 text-white" : "text-[#6d7a87]", className)}>
      <time>{message.time}</time>
      {out && <Checks />}
    </span>
  )
}

function Tail({ side, className }) {
  return (
    <svg
      viewBox="0 0 18 36"
      className={clsx("absolute bottom-0 w-[18px] h-9", side === "out" ? "left-full -ml-px" : "right-full -mr-px -scale-x-100", className)}
      fill="currentColor"
      aria-hidden="true"
    >
      <path d="M0 0 H1 C1 15 6 26 17 32 Q19 36 16 36 H0 Z" />
    </svg>
  )
}

function Bubble({ message }) {
  const { side, text, layout, first, last } = message
  const out = side === "out"

  return (
    <div
      className={clsx(
        "relative w-fit rounded-[36px] pl-[30px]",
        out ? "max-w-[90%] self-end text-white" : "max-w-[87%] bg-[#222d39] text-[#f7f9fb]",
        out && message.color,
        out && !first && "rounded-tr-2xl",
        out && (last ? "rounded-br-none" : "rounded-br-2xl"),
        !out && !first && "rounded-tl-2xl",
        !out && (last ? "rounded-bl-none" : "rounded-bl-2xl"),
        layout === "stacked" && "flex min-h-[142px] flex-col justify-between pr-5",
        layout === "wrapped" && "pr-[22px]",
        !layout && "flex items-end gap-6",
        !layout && (out ? "pr-5" : "pr-[22px]"),
        message.space
      )}
    >
      {layout === "wrapped" ? (
        <p className="flow-root pt-6 pb-[15px]">
          {text}
          <Stamp message={message} className="float-right mt-5" />
        </p>
      ) : (
        <>
          <p className={clsx(first ? "pt-[21px]" : "pt-6", layout === "stacked" ? "pr-2" : first ? "pb-[22px]" : "pb-[19px]")}>{text}</p>
          <Stamp message={message} className={clsx("self-end", last ? "pb-3" : "pb-[14px]")} />
        </>
      )}
      {last && <Tail side={side} className={out ? message.tail : "text-[#222d39]"} />}
    </div>
  )
}

function Sticker({ message }) {
  return (
    <div className={clsx("ml-[34px] flex w-fit flex-col items-end gap-[17px]", message.space)}>
      <div className="pr-[14px]">{message.sticker === "rofl" ? <RoflFace /> : <GrinFace />}</div>
      <time className="rounded-full bg-[#2a3747]/70 px-[18px] pt-[5px] pb-1.5 text-[36px] leading-[41px] text-white">{message.time}</time>
    </div>
  )
}

export default function App() {
  return (
    <div className="relative isolate flex h-screen flex-col overflow-hidden font-[Roboto,'Noto_Sans',sans-serif] text-[48px] leading-[57px]">
      <Wallpaper />

      <main className="flex shrink-0 flex-col pt-1.5 pr-[33px] pl-[30px]">
        {messages.map((message) =>
          message.sticker ? <Sticker key={message.id} message={message} /> : <Bubble key={message.id} message={message} />
        )}
      </main>

      <footer className="mx-[30px] mt-[26px] h-[120px] shrink-0 rounded-full border-3 border-[#3a4752] bg-linear-to-r from-[#18242f] via-[#1b3446] to-[#18242f]" />

      <button
        type="button"
        aria-label="Scroll to bottom"
        className="absolute right-[21px] bottom-[35px] flex size-[132px] items-center justify-center rounded-full border border-t-3 border-[#3c5568]/60 bg-linear-to-br from-[#20485f] to-[#1e3247]"
      >
        <svg viewBox="0 0 52 30" className="mt-1 w-[52px] h-[30px]" fill="none" stroke="#a9b8c6" strokeWidth="5" strokeLinecap="round" strokeLinejoin="round" aria-hidden="true">
          <path d="M3 3 L26 26 L49 3" />
        </svg>
      </button>
    </div>
  )
}
